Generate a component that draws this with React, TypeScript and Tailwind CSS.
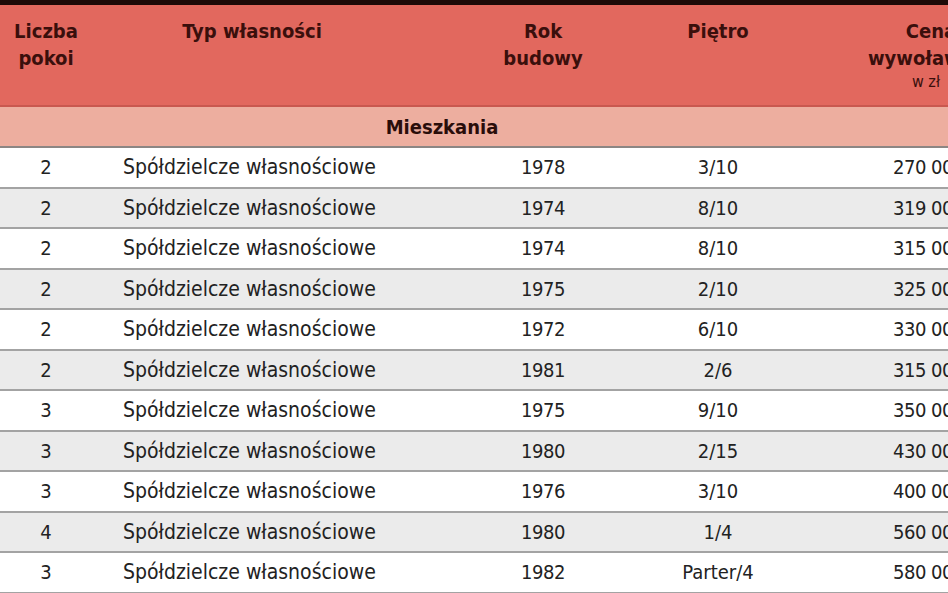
const rows = [
  { rooms: "2", year: "1978", floor: "3/10", price: "270 000" },
  { rooms: "2", year: "1974", floor: "8/10", price: "319 000" },
  { rooms: "2", year: "1974", floor: "8/10", price: "315 000" },
  { rooms: "2", year: "1975", floor: "2/10", price: "325 000" },
  { rooms: "2", year: "1972", floor: "6/10", price: "330 000" },
  { rooms: "2", year: "1981", floor: "2/6", price: "315 000" },
  { rooms: "3", year: "1975", floor: "9/10", price: "350 000" },
  { rooms: "3", year: "1980", floor: "2/15", price: "430 000" },
  { rooms: "3", year: "1976", floor: "3/10", price: "400 000" },
  { rooms: "4", year: "1980", floor: "1/4", price: "560 000" },
  { rooms: "3", year: "1982", floor: "Parter/4", price: "580 000" },
];

const font = { fontFamily: '"DejaVu Sans Condensed", "Liberation Sans Narrow", "Liberation Sans", sans-serif' };

export default function App() {
  return (
    <div className="h-[593px] w-[948px] overflow-hidden bg-white" style={font}>
      <div className="w-[1044px]">
        <div className="h-[5px] bg-[#1e0a08]" />

        {/* naglowek tabeli */}
        <div className="flex h-[102px] border-b-2 border-[#c9584f] bg-[#e2685e] pt-[13px] text-[20px] font-bold leading-[27px] text-[#3a0f0c]">
          <div className="w-[92px] text-center">
            Liczba
            <br />
            pokoi
          </div>
          <div className="w-[394px] pr-[74px] text-center">Typ własności</div>
          <div className="w-[114px] text-center">
            Rok
            <br />
            budowy
          </div>
          <div className="w-[236px] text-center">Piętro</div>
          <div className="w-[190px] text-center">
            Cena
            <br />
            wywoławcza
            <div className="pr-[10px] text-[16px] font-normal leading-[20px]">w zł</div>
          </div>
        </div>

        <div className="flex h-[41px] items-center border-b-2 border-[#8c8684] bg-[#edae9f]">
          <div className="w-[884px] text-center text-[20px] font-bold text-[#2a0d0a]">Mieszkania</div>
        </div>

        {rows.map((r, i) => (
          <div
            key={i}
            className={`flex h-[40.5px] items-center border-b-2 border-[#a3a3a3] text-[20px] leading-[24px] text-[#222] ${
              i % 2 === 1 ? "bg-[#ebebeb]" : "bg-white"
            }`}
          >
            <div className="w-[92px] text-center">{r.rooms}</div>
            <div className="w-[394px] pl-[31px] text-[21px]">Spółdzielcze własnościowe</div>
            <div className="w-[114px] text-center tracking-[-0.5px]">{r.year}</div>
            <div className="w-[236px] text-center">{r.floor}</div>
            <div className="w-[208px] pl-[57px] tracking-[-0.5px]">{r.price}</div>
          </div>
        ))}
      </div>
    </div>
  );
}
